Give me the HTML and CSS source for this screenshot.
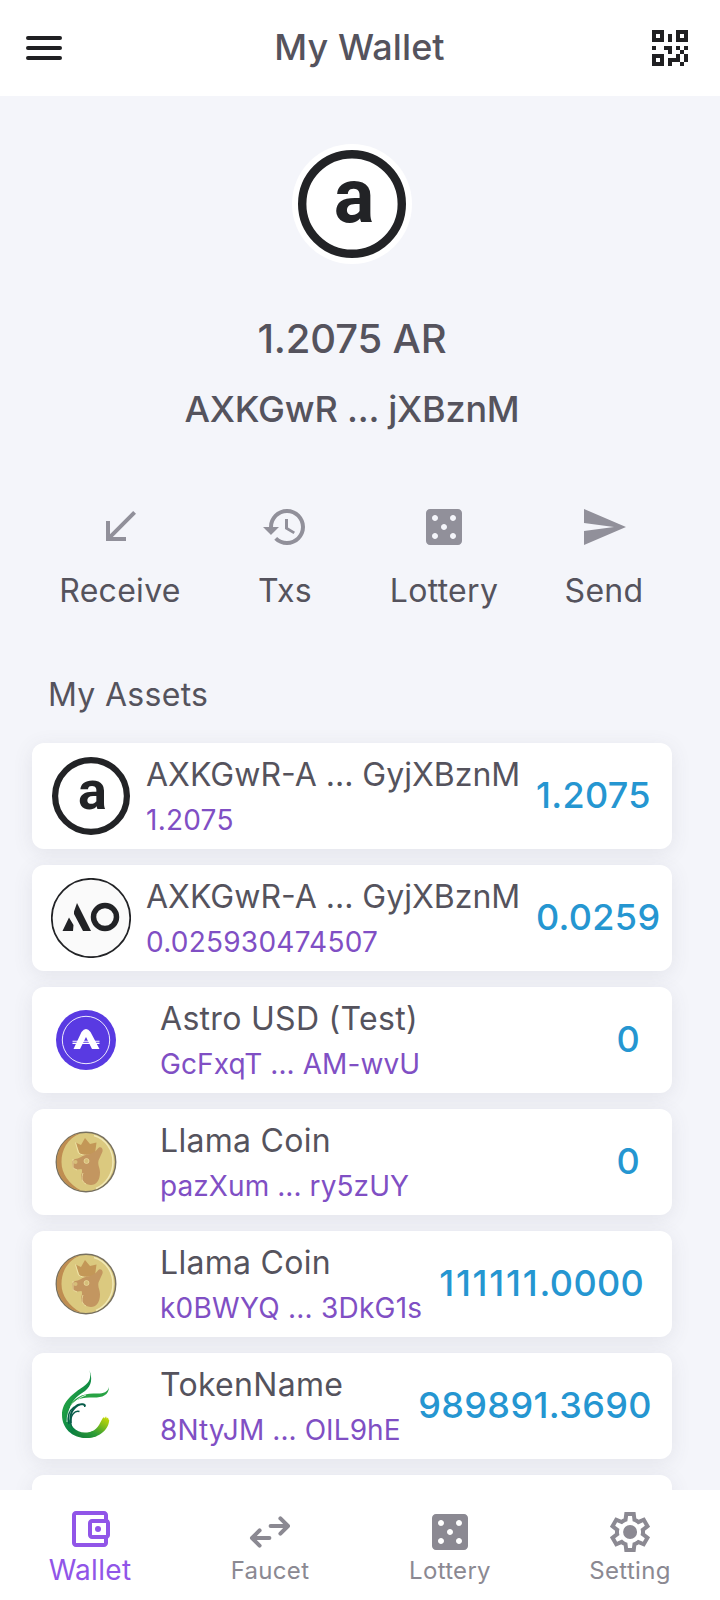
FILE: index.html
```html
<!DOCTYPE html>
<html lang="en">
<head>
<meta charset="utf-8">
<title>My Wallet</title>
<link rel="stylesheet" href="styles.css">
</head>
<body>
<svg class="defs" width="0" height="0" aria-hidden="true">
  <defs>
    <symbol id="dice" viewBox="0 0 24 24"><path d="M19 3H5c-1.1 0-2 .9-2 2v14c0 1.1.9 2 2 2h14c1.1 0 2-.9 2-2V5c0-1.1-.9-2-2-2zM7.500 18c-.83 0-1.500-.67-1.500-1.500S6.670 15 7.500 15s1.500.67 1.500 1.500S8.330 18 7.500 18zm0-9C6.670 9 6 8.330 6 7.500S6.670 6 7.500 6 9 6.670 9 7.500 8.330 9 7.500 9zm4.500 4.500c-.83 0-1.500-.67-1.500-1.500s.67-1.500 1.500-1.500 1.500.67 1.500 1.500-.67 1.500-1.500 1.500zm4.500 4.500c-.83 0-1.500-.67-1.500-1.500s.67-1.500 1.500-1.500 1.500.67 1.500 1.500-.67 1.500-1.500 1.500zm0-9c-.83 0-1.500-.67-1.500-1.500S15.670 6 16.500 6s1.500.67 1.500 1.500S17.330 9 16.500 9z"/></symbol>
    <symbol id="llama" viewBox="0 0 62 62">
      <circle cx="31" cy="31" r="29.700" fill="#dbc97f" stroke="#77705f" stroke-width="1.500"/>
      <path d="M25 2.500C11 5 1.800 17 1.800 31S12 57.500 26 59.500C14 53 6.500 43 6.500 31S12 8 25 2.500Z" fill="#bf8d51"/>
      <path d="M39 4.500C51 8 58 19 58 31s-7 22-17 26.500" fill="none" stroke="#f1e9b8" stroke-width="1.500"/>
      <path d="M20.500 11.500l5.500 2.500 4-7 5 6 6.500-1.500-1.500 11c-4 2.500-11 2.500-15 .5Z" fill="#c39757"/>
      <path d="M20.500 11.500l3 10.500c4 3 12 3 16.500 .5" fill="none" stroke="#efe3a6" stroke-width="1"/>
      <path d="M42.500 18c2-3.500 6-1.500 5 2.500l-4 9c-1 5 1.500 7 1.500 12 0 8-4 12.500-9 12.500s-10-4-10-8c0-3 2-5 .5-8-3 .5-8 1-9-1.500l-.5-6c2.500-3.500 6.500-2.500 9-4.500 4-3 12-2 16.500-8Z" fill="#c39660"/>
      <circle cx="31.500" cy="30" r="2.500" fill="#d6be79" stroke="#f0e4a9" stroke-width=".6"/>
      <circle cx="20.500" cy="31" r="2" fill="#d6be79"/>
      <path d="M18 28v9l4 2M28 42c-2 5-1 9 3 11" fill="none" stroke="#efe3a6" stroke-width=".8"/>
    </symbol>
    <linearGradient id="leaf" x1="0" y1="0" x2="1" y2="1">
      <stop offset="0" stop-color="#2daa3c"/><stop offset=".35" stop-color="#1d9c45"/>
      <stop offset=".6" stop-color="#078043"/><stop offset="1" stop-color="#54a832"/>
    </linearGradient>
    <linearGradient id="tail" x1="0" y1="1" x2="1" y2="0">
      <stop offset="0" stop-color="#07723e"/><stop offset=".4" stop-color="#2b9b37"/><stop offset="1" stop-color="#d6e000"/>
    </linearGradient>
  </defs>
</svg>

<header class="topbar">
  <svg class="icon" viewBox="0 0 48 48"><path d="M8 14h32M8 24h32M8 34h32" fill="none" stroke="currentColor" stroke-width="4" stroke-linecap="round"/></svg>
  <h1 class="topbar-title">My Wallet</h1>
  <svg class="icon" viewBox="0 0 24 24"><path d="M3 11H5V13H3V11M11 5H13V9H11V5M9 11H13V15H11V13H9V11M15 11H17V13H19V11H21V13H19V15H21V19H19V21H17V19H13V21H11V17H15V15H17V13H15V11M19 19V15H17V19H19M15 3H21V9H15V3M17 5V7H19V5H17M3 3H9V9H3V3M5 5V7H7V5H5M3 15H9V21H3V15M5 17V19H7V17H5Z"/></svg>
</header>

<main class="content">
  <section class="summary">
    <svg class="coin" viewBox="0 0 120 120">
      <circle cx="60" cy="60" r="60" fill="#fff"/>
      <circle cx="60" cy="60" r="49.800" fill="#fff" stroke="#222326" stroke-width="8.400"/>
      <text class="coin-letter" x="62" y="77.500">a</text>
    </svg>
    <p class="balance">1.2075 AR</p>
    <p class="address">AXKGwR ... jXBznM</p>
  </section>

  <section class="actions">
    <div class="action"><svg class="icon" viewBox="0 0 24 24"><path d="M20 5.410L18.590 4 7 15.590V9H5v10h10v-2H8.410z"/></svg><span>Receive</span></div>
    <div class="action"><svg class="icon" viewBox="0 0 24 24"><path d="M13 3c-4.970 0-9 4.030-9 9H1l3.890 3.890.07.14L9 12H6c0-3.870 3.130-7 7-7s7 3.130 7 7-3.130 7-7 7c-1.930 0-3.680-.79-4.940-2.060l-1.420 1.420C8.270 19.990 10.510 21 13 21c4.970 0 9-4.030 9-9s-4.030-9-9-9zm-1 5v5l4.280 2.540.72-1.210-3.500-2.080V8H12z"/></svg><span>Txs</span></div>
    <div class="action"><svg class="icon"><use href="#dice"/></svg><span>Lottery</span></div>
    <div class="action"><svg class="icon" viewBox="0 0 24 24"><path d="M2.010 21L23 12 2.010 3 2 10l15 2-15 2z"/></svg><span>Send</span></div>
  </section>

  <h2 class="section-title">My Assets</h2>

  <section class="assets">
    <article class="asset asset-main">
      <svg class="logo" viewBox="0 0 80 80">
        <circle cx="40" cy="40" r="35.900" fill="#fff" stroke="#222326" stroke-width="6.200"/>
        <text class="logo-letter" x="41.500" y="52.500">a</text>
      </svg>
      <div class="info"><span class="name">AXKGwR-A ... GyjXBznM</span><span class="detail detail-number">1.2075</span></div>
      <strong class="amount">1.2075</strong>
    </article>
    <article class="asset asset-main">
      <svg class="logo" viewBox="0.500 0 80 80">
        <circle cx="40.500" cy="40" r="39.200" fill="#fafafa" stroke="#222326" stroke-width="1.700"/>
        <path d="M12 53l6.500-13.500 4.500 7.500-.5 6ZM23.500 33.500l3-8.500L40.500 53h-8L23.500 36Z" fill="#222326"/>
        <circle cx="54.500" cy="39" r="11.500" fill="none" stroke="#222326" stroke-width="5.500"/>
      </svg>
      <div class="info"><span class="name">AXKGwR-A ... GyjXBznM</span><span class="detail detail-number">0.025930474507</span></div>
      <strong class="amount">0.0259</strong>
    </article>
    <article class="asset">
      <svg class="token" viewBox="0 0 62 62">
        <circle cx="31" cy="31" r="30" fill="#593ae2"/>
        <circle cx="31" cy="31" r="23.700" fill="none" stroke="#fff" stroke-width=".9"/>
        <path d="M18.500 40l8-17q4.500-6 9 0L44.500 40H37l-6-12-6 12Z" fill="#fff"/>
        <path d="M17.500 32.200h27M17.500 34.400h27" stroke="#fff" stroke-width="1.100"/>
      </svg>
      <div class="info"><span class="name">Astro USD (Test)</span><span class="detail">GcFxqT ... AM-wvU</span></div>
      <strong class="amount">0</strong>
    </article>
    <article class="asset">
      <svg class="token"><use href="#llama"/></svg>
      <div class="info"><span class="name">Llama Coin</span><span class="detail">pazXum ... ry5zUY</span></div>
      <strong class="amount">0</strong>
    </article>
    <article class="asset">
      <svg class="token"><use href="#llama"/></svg>
      <div class="info"><span class="name">Llama Coin</span><span class="detail detail-number">k0BWYQ ... 3DkG1s</span></div>
      <strong class="amount amount-wide"><span class="ones">111111</span>.0000</strong>
    </article>
    <article class="asset">
      <svg class="token token-tall" viewBox="-1 0 62 80">
        <path d="M33.300 4C35.500 11 34 16 27.500 20.500 18 27 6 35 6 49c0 13 10 23 24 23 4 0 8-.5 11-2l-4-5c-13 5-24-2-24-17 0-12 8-18 16-23C36 19.500 36.500 12 33.300 4Z" fill="url(#leaf)"/>
        <path d="M15 63.500c8 6 22 5.500 28-4.500l3.500-6.500 1.500-1.500.7 1.500 1.300-2.200.8 2.200 1.200-1 .5 2 .7.500C53 62 45 72 30 72c-7 0-12-4-15-8.500Z" fill="url(#tail)"/>
        <path d="M53 21c-1.500 6-7 7-14 6.500C27 27 17 32 13 42c4-7 11-11 22-10.500 10 .5 18-1.500 18-10.500Z" fill="#28a344"/>
        <path d="M11 56c0-14 8-23 19-27M12.500 56c-1-11 3-17 8-20" fill="none" stroke="#fff" stroke-width=".8"/>
        <path d="M16 62C9 47 19 35 28 37.500c3 1 2 4 0 3.500 1-3-8-3-12 7-1 5-.5 9 0 14Z" fill="#075c49"/>
        <path d="M15 57c-1-8 4-13 8.500-11.500M13 58c-2-8 1-14 5-17" fill="none" stroke="#075c49" stroke-width="1.400"/>
      </svg>
      <div class="info"><span class="name">TokenName</span><span class="detail">8NtyJM ... OIL9hE</span></div>
      <strong class="amount amount-full">989891.3690</strong>
    </article>
    <article class="asset"></article>
  </section>
</main>

<nav class="tabs">
  <a class="tab tab-active"><svg class="icon" viewBox="0 0 24 24"><path d="M21 7.280V5c0-1.100-.9-2-2-2H5c-1.110 0-2 .9-2 2v14c0 1.100.89 2 2 2h14c1.100 0 2-.9 2-2v-2.280c.59-.35 1-.98 1-1.720V9c0-.74-.41-1.370-1-1.720zM20 9v6h-7V9h7zM5 19V5h14v2h-6c-1.100 0-2 .9-2 2v6c0 1.100.9 2 2 2h6v2H5z"/><circle cx="16" cy="12" r="1.500"/></svg><span>Wallet</span></a>
  <a class="tab"><svg class="icon" viewBox="0 0 24 24"><path d="M12.300 9h8.500M17.200 5.200L21 9l-3.800 3.800M11.700 15H3.200M6.800 11.200L3 15l3.800 3.800" fill="none" stroke="currentColor" stroke-width="2" stroke-linecap="round" stroke-linejoin="round"/></svg><span>Faucet</span></a>
  <a class="tab"><svg class="icon"><use href="#dice"/></svg><span>Lottery</span></a>
  <a class="tab"><svg class="icon" viewBox="0 0 24 24"><path d="m9.250 22l-.4-3.200q-.325-.125-.612-.3t-.563-.375L4.700 19.375l-2.750-4.750l2.575-1.950Q4.500 12.500 4.500 12.337v-.675q0-.162.025-.337L1.950 9.375l2.750-4.750l2.975 1.250q.275-.2.575-.375t.6-.3l.4-3.200h5.500l.4 3.200q.325.125.613.3t.562.375l2.975-1.250l2.750 4.750l-2.575 1.950q.025.175.025.338v.674q0 .163-.05.338l2.575 1.950l-2.750 4.750l-2.950-1.250q-.275.2-.575.375t-.6.3l-.4 3.200zM11 20h1.975l.35-2.650q.775-.2 1.438-.587t1.212-.938l2.475 1.025l.975-1.700l-2.150-1.625q.125-.35.175-.737T17.500 12t-.05-.787t-.175-.738l2.150-1.625l-.975-1.700l-2.475 1.050q-.55-.575-1.212-.962t-1.438-.588L13 4h-1.975l-.35 2.650q-.775.2-1.437.588t-1.213.937L5.550 7.150l-.975 1.700l2.150 1.600q-.125.375-.175.750t-.05.800q0 .4.050.775t.175.750l-2.150 1.625l.975 1.700l2.475-1.050q.55.575 1.213.963t1.437.587zm1.050-4.500q1.450 0 2.475-1.025T15.550 12t-1.025-2.475T12.050 8.500q-1.475 0-2.488 1.025T8.550 12t1.013 2.475T12.050 15.500"/></svg><span>Setting</span></a>
</nav>
</body>
</html>
```
FILE: styles.css
```css
* { box-sizing: border-box; margin: 0; padding: 0; }

body {
  display: flex;
  flex-direction: column;
  width: 720px;
  height: 1600px;
  overflow: hidden;
  background: #f4f5fa;
  color: #55535d;
  font: 400 32px/48px Inter, "Noto Sans", sans-serif;
  letter-spacing: 0.3px;
}

.defs { position: absolute; }

.icon { display: block; width: 48px; height: 48px; fill: currentColor; }

.topbar {
  display: flex;
  flex: none;
  align-items: center;
  justify-content: space-between;
  height: 96px;
  padding: 0 26px 0 20px;
  background: #fff;
  color: #202022;
}

.topbar-title {
  padding: 0 0 2px 5px;
  color: #55535d;
  font-size: 36px;
  font-weight: 500;
  line-height: 54px;
  letter-spacing: 0.1px;
}

.content { flex: 1; min-height: 0; overflow: hidden; }

.summary {
  display: flex;
  flex-direction: column;
  align-items: center;
  width: 704px;
  padding-top: 48px;
  font-weight: 500;
}

.coin { width: 120px; height: 120px; }

.coin-letter, .logo-letter {
  fill: #222326;
  font-family: Roboto, sans-serif;
  font-weight: 700;
  text-anchor: middle;
  letter-spacing: 0;
}

.coin-letter { font-size: 76px; }
.logo-letter { font-size: 54px; }

.balance { margin-top: 45px; font-size: 40px; line-height: 60px; letter-spacing: -0.15px; }
.address { margin-top: 13px; font-size: 36px; line-height: 54px; letter-spacing: -0.2px; }

.actions {
  display: grid;
  grid-template-columns: 164px 166px 152px 168px;
  margin-top: 67px;
  padding-left: 38px;
}

.action { display: flex; flex-direction: column; align-items: center; gap: 16px; }
.action .icon { color: #91909a; }

.section-title { margin-top: 56px; padding-left: 48px; font-size: 32px; font-weight: 400; }

.assets {
  display: flex;
  flex-direction: column;
  gap: 16px;
  width: 704px;
  margin-top: 24px;
  padding: 0 32px;
}

.asset {
  display: flex;
  flex: none;
  align-items: center;
  height: 106px;
  padding-left: 23px;
  border-radius: 12px;
  background: #fff;
  box-shadow: 0 4px 20px rgba(76, 78, 100, 0.1);
}

.asset-main { padding-left: 19px; }
.asset-main .name { letter-spacing: 0; }

.logo { width: 80px; height: 80px; margin-right: 15px; }
.token { width: 62px; height: 62px; margin-right: 43px; }
.token-tall { height: 80px; }

.info { display: flex; flex-direction: column; white-space: nowrap; }
.detail { color: #804fc4; font-size: 28px; line-height: 42px; letter-spacing: 0.08px; }
.detail-number { letter-spacing: 0.24px; }

.amount {
  margin-left: auto;
  padding: 0 32px 2px 0;
  color: #2596d1;
  font-size: 36px;
  font-weight: 500;
  line-height: 54px;
}

.asset-main .amount { width: 136px; padding-right: 0; }
.amount-wide { padding-right: 28px; }
.ones { letter-spacing: 1.8px; }
.amount-full { padding-right: 20px; letter-spacing: 0.4px; }

.tabs {
  display: grid;
  flex: none;
  grid-template-columns: repeat(4, 180px);
  height: 110px;
  background: #fff;
  color: #8b8992;
  font-size: 24px;
  line-height: 30px;
}

.tab { display: flex; flex-direction: column; align-items: center; padding-top: 18px; }
.tab-active { padding-top: 15px; color: #9155e8; font-size: 28px; line-height: 34px; }
```
